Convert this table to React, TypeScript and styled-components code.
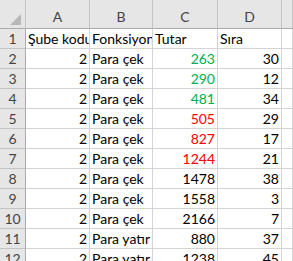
import styled, { createGlobalStyle } from "styled-components";

type Tone = "green" | "red" | undefined;

interface Row {
  code: number;
  op: string;
  amount: number;
  tone?: Tone;
  rank: number;
}

const rows: Row[] = [
  { code: 2, op: "Para çek", amount: 263, tone: "green", rank: 30 },
  { code: 2, op: "Para çek", amount: 290, tone: "green", rank: 12 },
  { code: 2, op: "Para çek", amount: 481, tone: "green", rank: 34 },
  { code: 2, op: "Para çek", amount: 505, tone: "red", rank: 29 },
  { code: 2, op: "Para çek", amount: 827, tone: "red", rank: 17 },
  { code: 2, op: "Para çek", amount: 1244, tone: "red", rank: 21 },
  { code: 2, op: "Para çek", amount: 1478, rank: 38 },
  { code: 2, op: "Para çek", amount: 1558, rank: 3 },
  { code: 2, op: "Para çek", amount: 2166, rank: 7 },
  { code: 2, op: "Para yatır", amount: 880, rank: 37 },
  { code: 2, op: "Para yatır", amount: 1238, rank: 45 },
];

const toneColor = (t: Tone) =>
  t === "green" ? "#00b050" : t === "red" ? "#ff0000" : "#000000";

const GlobalStyle = createGlobalStyle`
  html, body {
    margin: 0;
    padding: 0;
    background: #ffffff;
  }
`;

export default function App() {
  return (
    <>
      <GlobalStyle />
      <Sheet>
        <Corner>
          <CornerMark />
        </Corner>
        {["A", "B", "C", "D"].map((c) => (
          <ColHeader key={c}>{c}</ColHeader>
        ))}
        <ColHeader />

        <RowHeader>1</RowHeader>
        <Cell>Şube kodu</Cell>
        <Cell>Fonksiyon</Cell>
        <Cell>Tutar</Cell>
        <Cell>Sıra</Cell>
        <Cell />

        {rows.map((r, i) => (
          <Line key={i}>
            <RowHeader>{i + 2}</RowHeader>
            <Cell $num>{r.code}</Cell>
            <Cell>{r.op}</Cell>
            <Cell $num $color={toneColor(r.tone)}>
              {r.amount}
            </Cell>
            <Cell $num>{r.rank}</Cell>
            <Cell />
          </Line>
        ))}
      </Sheet>
    </>
  );
}

const Sheet = styled.div`
  display: grid;
  grid-template-columns: 26px 64px 63px 65px 64px 1fr;
  grid-template-rows: 29px;
  grid-auto-rows: 20px;
  width: 293px;
  height: 261px;
  overflow: hidden;
  font-family: Lato, "Liberation Sans", sans-serif;
  font-size: 14px;
  color: #000;
`;

const Line = styled.div`
  display: contents;
`;

const Corner = styled.div`
  position: relative;
  background: #e6e6e6;
  border-right: 1px solid #c3c3c3;
  border-bottom: 1px solid #ababab;
`;

const CornerMark = styled.div`
  position: absolute;
  right: 4px;
  bottom: 3px;
  width: 0;
  height: 0;
  border-left: 11px solid transparent;
  border-bottom: 11px solid #b8b8b8;
`;

const ColHeader = styled.div`
  display: flex;
  align-items: flex-end;
  justify-content: center;
  padding-bottom: 3px;
  background: #e6e6e6;
  border-right: 1px solid #c3c3c3;
  border-bottom: 1px solid #ababab;
  color: #444;
  overflow: hidden;
`;

const RowHeader = styled.div`
  display: flex;
  align-items: flex-end;
  justify-content: center;
  padding-bottom: 1px;
  background: #e6e6e6;
  border-right: 1px solid #ababab;
  border-bottom: 1px solid #c3c3c3;
  color: #444;
  overflow: hidden;
`;

const Cell = styled.div<{ $num?: boolean; $color?: string }>`
  display: flex;
  align-items: flex-end;
  justify-content: ${(p) => (p.$num ? "flex-end" : "flex-start")};
  padding: 0 2px 1px 2px;
  border-right: 1px solid #d4d4d4;
  border-bottom: 1px solid #d4d4d4;
  color: ${(p) => p.$color || "#000"};
  white-space: nowrap;
  overflow: hidden;
  min-width: 0;
`;
